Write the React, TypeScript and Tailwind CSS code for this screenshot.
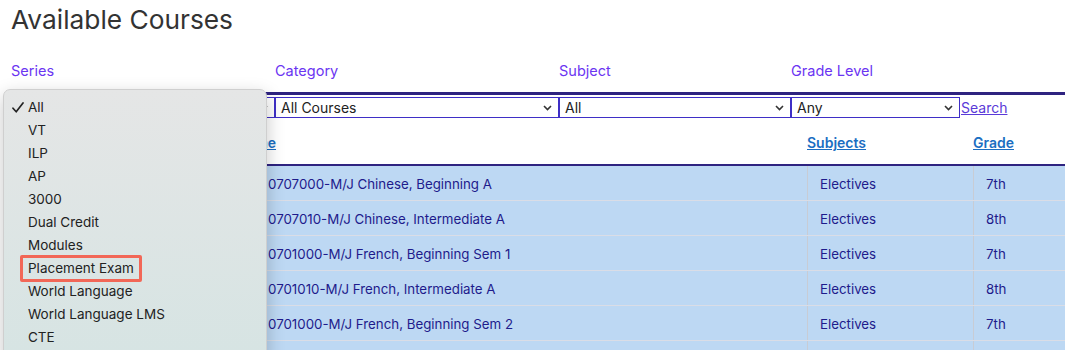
import React from 'react';

const SERIES = ['All', 'VT', 'ILP', 'AP', '3000', 'Dual Credit', 'Modules', 'Placement Exam', 'World Language', 'World Language LMS', 'CTE'];

const COURSES = [
  { name: '0707000-M/J Chinese, Beginning A', subject: 'Electives', grade: '7th' },
  { name: '0707010-M/J Chinese, Intermediate A', subject: 'Electives', grade: '8th' },
  { name: '0701000-M/J French, Beginning Sem 1', subject: 'Electives', grade: '7th' },
  { name: '0701010-M/J French, Intermediate A', subject: 'Electives', grade: '8th' },
  { name: '0701000-M/J French, Beginning Sem 2', subject: 'Electives', grade: '7th' },
  { name: '0701010-M/J French, Intermediate B', subject: 'Electives', grade: '8th' },
];

const Chevron = () => (
  <svg width="9" height="6" viewBox="0 0 9 6" className="shrink-0">
    <path d="M1 1l3.5 3.5L8 1" fill="none" stroke="#333" strokeWidth="1.6" />
  </svg>
);

const Check = () => (
  <svg width="12" height="11" viewBox="0 0 12 11" className="shrink-0">
    <path d="M1 6.2l3.2 3.6L11 1" fill="none" stroke="#222" strokeWidth="1.7" strokeLinecap="round" strokeLinejoin="round" />
  </svg>
);

const SelectBox: React.FC<{ value: string; width: string }> = ({ value, width }) => (
  <div className={`${width} h-[21px] border border-[#3f2fc6] bg-white flex items-center justify-between pl-[5px] pr-[6px] text-[14px] text-[#222]`}>
    <span className="leading-none">{value}</span>
    <Chevron />
  </div>
);

const SeriesMenu: React.FC = () => (
  <div className="absolute left-[3px] top-[89px] w-[264px] h-[275px] rounded-[7px] border border-[#cfcfcf] bg-gradient-to-b from-[#e5e6e6] to-[#d6e4e3] shadow-[0_6px_18px_rgba(0,0,0,0.22)] pt-[6px] text-[13.5px] text-[#222]">
    {SERIES.map((s, i) => (
      <div key={s} className="h-[23px] flex items-center pl-[8px]">
        <span className="w-[16px] flex items-center">{i === 0 ? <Check /> : null}</span>
        {s === 'Placement Exam' ? (
          <span className="-ml-[8px] -my-[2px] border-[3px] border-[#f26757] rounded-[2px] px-[5px] leading-[21px]">{s}</span>
        ) : (
          <span className="leading-[23px]">{s}</span>
        )}
      </div>
    ))}
  </div>
);

export default function App() {
  return (
    <div className="relative w-[1072px] h-[350px] overflow-hidden bg-white font-['Inter','Liberation_Sans',sans-serif]">
      <div className="pl-[11px] pt-[4px]">
        <h1 className="text-[26.3px] leading-[32px] text-[#333] font-normal">Available Courses</h1>

        <div className="mt-[25px] flex text-[14.5px] leading-[20px] text-[#6b35f2]">
          <div className="w-[264px]">Series</div>
          <div className="w-[284px]">Category</div>
          <div className="w-[232px]">Subject</div>
          <div className="w-[169px]">Grade Level</div>
        </div>

        <div className="mt-[11px] w-[1054px] border-t-[3px] border-[#2e2380] pt-[2px] flex items-center">
          <SelectBox value="All" width="w-[264px]" />
          <SelectBox value="All Courses" width="w-[284px]" />
          <SelectBox value="All" width="w-[232px]" />
          <SelectBox value="Any" width="w-[169px]" />
          <a href="#" className="text-[14px] text-[#5a3ad8] underline leading-none ml-[1px]">Search</a>
        </div>

        <div className="w-[1054px]">
          <div className="grid grid-cols-[796px_166px_92px] pt-[15px] pb-[11px] text-[14px] leading-[20px] font-semibold text-[#1b6ec2] border-b-2 border-[#2e2380]">
            <div className="pl-[173px]"><a href="#" className="underline">Course Name</a></div>
            <div><a href="#" className="underline">Subjects</a></div>
            <div><a href="#" className="underline">Grade</a></div>
          </div>
          {COURSES.map((c) => (
            <div key={c.name + c.grade} className="grid grid-cols-[796px_166px_92px] h-[35px] bg-[#bdd8f3] border-b border-[#dadde6] text-[13.3px] text-[#1e1b8c]">
              <div className="flex items-center pt-[4px] pl-[257px]">{c.name}</div>
              <div className="flex items-center pt-[4px] pl-[12px] border-l border-[#c8ccd4]">{c.subject}</div>
              <div className="flex items-center pt-[4px] pl-[12px] border-l border-[#c8ccd4]">{c.grade}</div>
            </div>
          ))}
        </div>
      </div>

      <SeriesMenu />
    </div>
  );
}
